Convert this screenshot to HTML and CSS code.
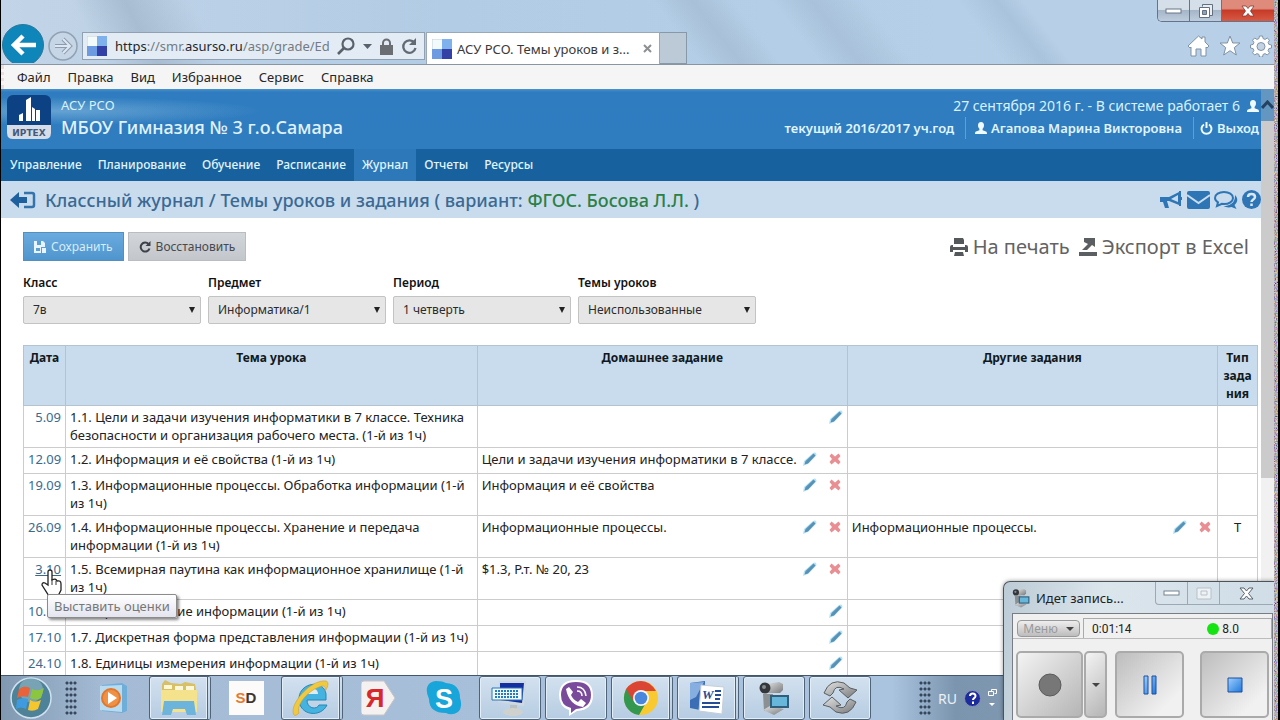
FILE: index.html
```html
<!DOCTYPE html>
<html lang="ru">
<head>
<meta charset="utf-8">
<title>АСУ РСО. Темы уроков и заданий</title>
<link rel="stylesheet" href="styles.css">
</head>
<body>
<svg class="defs" aria-hidden="true">
  <defs>
    <linearGradient id="pen" x1="0" y1="0" x2="1" y2="1"><stop offset="0" stop-color="#62a6cf"/><stop offset="1" stop-color="#4d7f9e"/></linearGradient>
    <linearGradient id="steel" x1="0" y1="0" x2="1" y2="1"><stop offset="0" stop-color="#e4e4e4"/><stop offset="1" stop-color="#77797c"/></linearGradient>
    <linearGradient id="blueglass" x1="0" y1="0" x2="1" y2="1"><stop offset="0" stop-color="#9fd0fb"/><stop offset="1" stop-color="#1e78dd"/></linearGradient>
    <filter id="grain" x="0" y="0" width="100%" height="100%"><feTurbulence type="fractalNoise" baseFrequency="0.8" numOctaves="2" seed="4"/><feColorMatrix values="1 .4 0 0 -.25  .4 1 0 0 -.3  0 .4 1 0 -.25  0 0 0 0 1"/></filter>
    <symbol id="i-pencil" viewBox="0 0 14 14"><path d="M0 14l1-5 9-8q2-1 3 0t0 3l-8 8z" fill="#b5e3f5"/><path d="M1.500 12.500l1-3.500 8-7.500 2 2-7.500 8z" fill="url(#pen)"/></symbol>
    <symbol id="i-cross" viewBox="0 0 12 12"><path d="M2.500.500L6 3.500l3.500-3 2 2.500-2.500 3 2.500 3-2 2.500L6 8.500l-3.500 3L.500 9 3 6 .500 3z" fill="#e98f93"/></symbol>
    <symbol id="i-user" viewBox="0 0 12 12"><path d="M6 0c2 0 3 1.300 3 3.200C9 5 8.200 6 7.600 6.800v1.400L11 9.600c.7.300 1 1 1 2.400H0c0-1.400.3-2.100 1-2.400l3.400-1.400V6.800C3.800 6 3 5 3 3.200 3 1.300 4 0 6 0z" fill="#eefaff"/></symbol>
    <symbol id="i-site" viewBox="0 0 20 20"><path d="M0 0h10v10H0z" fill="#f3fafa"/><path d="M10 0h10v10H10z" fill="#7fb2ec"/><path d="M0 10h10v10H0z" fill="#6c9be2"/><path d="M10 10h10v10H10z" fill="#3340a5"/><path d="M0 10V0h10" fill="none" stroke="#c3d0d8"/></symbol>
    <symbol id="i-cam" viewBox="0 0 32 34"><path d="M8 3l13-2 4 2v6l-3 3H9z" fill="url(#steel)"/><circle cx="7" cy="7" r="5.500" fill="#34363a"/><circle cx="6" cy="6" r="2" fill="#858a92"/><path d="M5 13h10l-1 13 3 4H6z" fill="#8d9093"/><path d="M5 29l7-4 14 3-10 6z" fill="url(#steel)"/><path d="M12 14h19v13H12z" fill="#315e7b"/><path d="M14 16h15v9H14z" fill="#66b7da"/></symbol>
  </defs>
</svg>

<div class="screen">
<main class="desktop">

<header class="browser">
  <div class="aero">
    <div class="winbtns">
      <button type="button" aria-label="Свернуть"><svg width="18" height="8"><rect x="1" y="2" width="15" height="4" fill="#fff" stroke="#697684"/></svg></button>
      <button type="button" aria-label="Развернуть"><svg width="16" height="16" fill="none" stroke="#637080"><path d="M4.500 3.500v-2h10v11h-3" fill="#e9edf2"/><path d="M1.500 4.500h10v10h-10z" fill="#fff"/><path d="M4.500 7.500h4v4h-4z" fill="#8fa4b9"/></svg></button>
      <button type="button" class="close" aria-label="Закрыть"><svg width="14" height="12"><path d="M1 1h4l2 2.500L9 1h4L9.500 6l3.500 5H9L7 8.500 5 11H1l3.500-5z" fill="#fff" stroke="#7d3a35" stroke-width=".8"/></svg></button>
    </div>
    <button type="button" class="back" aria-label="Назад"><svg width="42" height="39" viewBox="0 0 42 39"><circle cx="21" cy="21" r="20.500" fill="#0e86b9" stroke="#2c7799"/><path d="M34 21H12M21 12l-9 9 9 9" fill="none" stroke="#fff" stroke-width="4.500"/></svg></button>
    <button type="button" class="forward" aria-label="Вперёд"><svg width="30" height="30" viewBox="0 0 30 30"><circle cx="15" cy="15" r="14" fill="#c6d6e6" stroke="#91a2b3" stroke-width="1.500"/><path d="M7 15h15M15 8l7 7-7 7" fill="none" stroke="#8c9cae" stroke-width="4"/><path d="M7 15h15M15 8l7 7-7 7" fill="none" stroke="#dde8f2" stroke-width="2"/></svg></button>
    <div class="address">
      <svg width="20" height="20"><use href="#i-site"/></svg>
      <span class="url"><b>https</b>://smr.<b>asurso.ru</b>/asp/grade/Ed</span>
      <button type="button" aria-label="Поиск"><svg width="18" height="18" fill="none" stroke="#59626c"><circle cx="11" cy="7" r="5.500" stroke-width="2.200"/><path d="M7 11l-6 6" stroke-width="2.600"/></svg></button>
      <button type="button" aria-label="Список"><svg width="9" height="5"><path d="M0 0h9L4.500 5z" fill="#59626c"/></svg></button>
      <svg class="lock" width="13" height="17"><path d="M0 7h13v10H0z" fill="#6b6e72"/><path d="M3 8V5a3.500 3.500 0 017 0v3" fill="none" stroke="#6b6e72" stroke-width="2"/></svg>
      <button type="button" aria-label="Обновить"><svg width="17" height="18"><path d="M13.500 6A6.200 6.200 0 1014.500 11" fill="none" stroke="#626a73" stroke-width="2.300"/><path d="M15 1v7H8z" fill="#626a73"/></svg></button>
    </div>
    <div class="tab"><svg width="20" height="20"><use href="#i-site"/></svg><span>АСУ РСО. Темы уроков и з...</span><button type="button" aria-label="Закрыть вкладку"><svg width="9" height="9"><path d="M1 1l7 7M8 1L1 8" stroke="#8d8f92" stroke-width="2"/></svg></button></div>
    <button type="button" class="newtab" aria-label="Новая вкладка"></button>
    <div class="tools">
      <button type="button" aria-label="Домой"><svg width="23" height="22"><path d="M11.500 1L1 11l2 2 1-1v9h5v-7h5v7h5v-9l1 1 2-2-4-4V2h-3v2z" fill="#fff" stroke="#7f91a4"/></svg></button>
      <button type="button" aria-label="Избранное"><svg width="22" height="22"><path d="M11 1l2.700 7H21l-5.700 4.600 2 7.400L11 15.700 4.700 20l2-7.400L1 8h7.300z" fill="#fff" stroke="#7f91a4"/></svg></button>
      <button type="button" aria-label="Сервис"><svg width="22" height="22"><path d="M9.500 1h3l.6 2.600 2 .8 2.200-1.400 2.200 2.200-1.400 2.200.8 2 2.600.6v3l-2.600.6-.8 2 1.400 2.200-2.200 2.200-2.200-1.400-2 .8-.6 2.600h-3l-.6-2.600-2-.8-2.200 1.400L2.500 17.800l1.400-2.200-.8-2L.500 13v-3l2.600-.6.8-2L2.500 5.200 4.700 3l2.200 1.400 2-.8z" fill="#fff" stroke="#8293a5"/><circle cx="11" cy="11.500" r="4" fill="#c3d3e4" stroke="#8293a5"/></svg></button>
    </div>
  </div>
  <nav class="menubar"><a href="#">Файл</a><a href="#">Правка</a><a href="#">Вид</a><a href="#">Избранное</a><a href="#">Сервис</a><a href="#">Справка</a></nav>
</header>

<div class="viewport">
<div class="page">
  <header class="sitehead">
    <svg class="logo" width="44" height="46" viewBox="0 0 44 46"><rect width="44" height="44" rx="6" fill="#0c4283"/><path d="M0 30h44v8q0 6-6 6H6q-6 0-6-6z" fill="#d7dde8"/><path d="M12 20l4-2v8h-4zM19 5l5-3v24h-5zM25 12l3 2v12h-3zM29 15h4v11h-4z" fill="#fff"/><text x="22" y="41" text-anchor="middle" class="logotext">ИРТЕХ</text></svg>
    <div class="brand"><div class="sys">АСУ РСО</div><div class="school">МБОУ Гимназия № 3 г.о.Самара</div></div>
    <div class="session">
      <div class="today">27 сентября 2016 г. - В системе работает 6 <svg width="12" height="12"><use href="#i-user"/></svg></div>
      <div class="who"><span>текущий 2016/2017 уч.год</span><a href="#"><svg width="12" height="12"><use href="#i-user"/></svg>Агапова Марина Викторовна</a><a href="#"><svg width="13" height="13" fill="none" stroke="#eefaff" stroke-width="2"><path d="M4 2.500a5 5 0 105 0M6.500 0v6"/></svg>Выход</a></div>
    </div>
  </header>
  <nav class="mainnav"><a href="#">Управление</a><a href="#">Планирование</a><a href="#">Обучение</a><a href="#">Расписание</a><a href="#" class="on">Журнал</a><a href="#">Отчеты</a><a href="#">Ресурсы</a></nav>
  <div class="crumb">
    <a href="#" aria-label="Выйти"><svg width="26" height="18"><path d="M0 9l9-8v5h8v6H9v5z" fill="#1c60a0"/><path d="M14 2h8q2 0 2 2v10q0 2-2 2h-8" fill="none" stroke="#3573ad" stroke-width="2.500"/></svg></a>
    <h1>Классный журнал / Темы уроков и задания ( вариант: <em>ФГОС. Босова Л.Л.</em> )</h1>
    <div class="alerts">
      <a href="#" aria-label="Объявления"><svg width="24" height="20"><path d="M1 7h9l10-5v13l-10-4H8l2 7H6L4 12H1z" fill="#2d75b5"/><path d="M12 9l7-4v7z" fill="#c8dced"/><path d="M21 1v15M22 7v3" stroke="#2d75b5" stroke-width="2"/></svg></a>
      <a href="#" aria-label="Почта"><svg width="23" height="18"><rect width="23" height="18" rx="2" fill="#2d75b5"/><path d="M0 4l11.500 8L23 4" fill="none" stroke="#c8dced" stroke-width="2"/></svg></a>
      <a href="#" aria-label="Форум"><svg width="24" height="20"><path d="M21 5c4 4 2 8-.500 10l2 4-5-2c-3 1-6 0-8-1 6 0 12-3 11.500-11z" fill="#2d75b5"/><path d="M10 2c5 0 9 2.500 9 6s-4 6-9 6l-2-.2L3 16l1-3.700C2 11 1 10 1 8c0-3.500 4-6 9-6z" fill="#c8dced" stroke="#2d75b5" stroke-width="2"/></svg></a>
      <a href="#" aria-label="Справка"><svg width="19" height="19"><circle cx="9.500" cy="9.500" r="9.500" fill="#2d75b5"/><path d="M6 7c0-4 7-4 7 0 0 2.500-3.500 2.500-3.500 5M9.500 13.500v2.500" fill="none" stroke="#d8e8f4" stroke-width="2.500"/></svg></a>
    </div>
  </div>

  <section class="content">
    <div class="actions">
      <button type="button" class="btn save"><svg width="12" height="12"><path d="M0 0h9l2 2v4H7v6H0z" fill="#e8f5ff"/><path d="M3 0h4v4H3zM2 7h4v3H2z" fill="#5a9fd6"/><path d="M8 7h4v5H8z" fill="#e8f5ff"/></svg>Сохранить</button>
      <button type="button" class="btn"><svg width="12" height="12"><path d="M9.500 3A4.500 4.500 0 1010.500 7.500" fill="none" stroke="#3c4248" stroke-width="2"/><path d="M11.500 0v5h-5z" fill="#3c4248"/></svg>Восстановить</button>
      <div class="export">
        <a href="#"><svg width="18" height="18"><path d="M4 0h9l1 2v4H4zM0 9q0-2 2-2h1v2h12V7h1q2 0 2 2v5h-3v-2H3v2H0zM5 14h8l1 4H4z" fill="#55585b"/></svg>На печать</a>
        <a href="#"><svg width="18" height="18"><path d="M5 0h11v9l-3-2-5 5H3l6-6-4-2zM0 14h18v4H0z" fill="#5c5f61"/></svg>Экспорт в Excel</a>
      </div>
    </div>
    <form class="filters">
      <div class="field"><label for="f1">Класс</label><div class="pick"><select id="f1"><option>7в</option></select><i></i></div></div>
      <div class="field"><label for="f2">Предмет</label><div class="pick"><select id="f2"><option>Информатика/1</option></select><i></i></div></div>
      <div class="field"><label for="f3">Период</label><div class="pick"><select id="f3"><option>1 четверть</option></select><i></i></div></div>
      <div class="field"><label for="f4">Темы уроков</label><div class="pick"><select id="f4"><option>Неиспользованные</option></select><i></i></div></div>
    </form>
    <table class="plan">
      <colgroup><col class="c-date"><col><col class="c-task"><col class="c-task"><col class="c-type"></colgroup>
      <thead><tr><th>Дата</th><th>Тема урока</th><th>Домашнее задание</th><th>Другие задания</th><th>Тип<br>зада<br>ния</th></tr></thead>
      <tbody>
        <tr><td><a href="#">5.09</a></td><td>1.1. Цели и задачи изучения информатики в 7 классе. Техника безопасности и организация рабочего места. (1-й из 1ч)</td><td><div class="task"><span></span><svg><use href="#i-pencil"/></svg></div></td><td></td><td></td></tr>
        <tr><td><a href="#">12.09</a></td><td>1.2. Информация и её свойства (1-й из 1ч)</td><td><div class="task"><span>Цели и задачи изучения информатики в 7 классе.</span><svg><use href="#i-pencil"/></svg><svg class="del"><use href="#i-cross"/></svg></div></td><td></td><td></td></tr>
        <tr><td><a href="#">19.09</a></td><td>1.3. Информационные процессы. Обработка информации (1-й из 1ч)</td><td><div class="task"><span>Информация и её свойства</span><svg><use href="#i-pencil"/></svg><svg class="del"><use href="#i-cross"/></svg></div></td><td></td><td></td></tr>
        <tr><td><a href="#">26.09</a></td><td>1.4. Информационные процессы. Хранение и передача информации (1-й из 1ч)</td><td><div class="task"><span>Информационные процессы.</span><svg><use href="#i-pencil"/></svg><svg class="del"><use href="#i-cross"/></svg></div></td><td><div class="task"><span>Информационные процессы.</span><svg><use href="#i-pencil"/></svg><svg class="del"><use href="#i-cross"/></svg></div></td><td>Т</td></tr>
        <tr><td class="hover"><a href="#">3.10</a>
          <svg class="hand" width="22" height="28" viewBox="0 0 22 28"><path d="M7 16V3q0-2 2-2t2 2v8q4-2 5 1 4-1 4 3v6l-3 6H8L1 16q0-3 3-2z" fill="#fff" stroke="#222" stroke-width="1.300"/><path d="M11 10v6M15 12v4" stroke="#333"/></svg>
          <div class="tip" role="tooltip">Выставить оценки</div></td><td>1.5. Всемирная паутина как информационное хранилище (1-й из 1ч)</td><td><div class="task"><span>$1.3, Р.т. № 20, 23</span><svg><use href="#i-pencil"/></svg><svg class="del"><use href="#i-cross"/></svg></div></td><td></td><td></td></tr>
        <tr><td><a href="#">10.10</a></td><td>1.6. Представление информации (1-й из 1ч)</td><td><div class="task"><span></span><svg><use href="#i-pencil"/></svg></div></td><td></td><td></td></tr>
        <tr><td><a href="#">17.10</a></td><td>1.7. Дискретная форма представления информации (1-й из 1ч)</td><td><div class="task"><span></span><svg><use href="#i-pencil"/></svg></div></td><td></td><td></td></tr>
        <tr><td><a href="#">24.10</a></td><td>1.8. Единицы измерения информации (1-й из 1ч)</td><td><div class="task"><span></span><svg><use href="#i-pencil"/></svg></div></td><td></td><td></td></tr>
      </tbody>
    </table>
  </section>
</div>
<div class="scroll"><div class="up"><svg width="13" height="10"><path d="M1 8l5.500-6L12 8" fill="none" stroke="#24425f" stroke-width="3"/></svg></div><div class="thumb"></div></div>
</div>

<footer class="taskbar">
  <button type="button" class="start" aria-label="Пуск"><svg width="42" height="42" viewBox="0 0 42 42"><circle cx="21" cy="21" r="20" fill="#4e8299" stroke="#cfe2ee" stroke-width="1.500"/><circle cx="21" cy="13" r="12" fill="#9fc3d0" opacity=".5"/><path d="M9 12q5-4 11-1l-2 9q-6-2-11 1z" fill="#e8623a"/><path d="M22 12q6 3 12-1l-3 10q-5 3-11 0z" fill="#8cc63f"/><path d="M7 23q5-3 11-1l-2 10q-5-3-10 0z" fill="#3f9be0"/><path d="M20 23q5 3 11 0l-3 9q-5 3-10 1z" fill="#f6c62d"/></svg></button>
  <div class="grip"></div>
  <div class="slots">
    <button type="button" aria-label="Проигрыватель"><svg width="30" height="32" viewBox="0 0 30 32"><path d="M3 3l20-2 5 3v25l-5 2-20-2z" fill="#70aeda"/><path d="M1 4l22-1v27L1 28z" fill="#b8dbef"/><circle cx="12" cy="16" r="10" fill="#e2762c"/><circle cx="12" cy="16" r="8" fill="#ef9144"/><path d="M9 10l9 6-9 6z" fill="#fff"/></svg></button>
    <button type="button" class="run many" aria-label="Проводник"><svg width="40" height="38" viewBox="0 0 40 38"><path d="M3 5l3-4 6 3 10 1 4-2 10 2 1 6v22H3z" fill="#d8c066"/><path d="M2 11h36v22H2z" fill="#f4e38c"/><path d="M5 6h8v4H5zM16 7h8v4h-8zM27 7h8v4h-8z" fill="#fcf7d7"/><path d="M5 22h30l2 14h-9l-2-6H14l-2 6H3z" fill="#6db4dc"/></svg></button>
    <button type="button" aria-label="SD"><span class="sd"><b>S</b>D</span></button>
    <button type="button" class="run many" aria-label="Internet Explorer"><svg width="42" height="38" viewBox="0 0 42 38"><path d="M37 26c-6 13-28 11-28-6S34 0 36 15v6H17c0 9 10 10 12 5z" fill="#45b3df" stroke="#2588b6"/><path d="M17 15h11c0-7-10-7-11 0z" fill="#dcecf4"/><path d="M4 36C-2 27 20 0 36 2c4 1 1 8-1 10 1-5-1-6-6-4C16 13 6 27 9 34c-2 2-4 3-5 2z" fill="#f0c943" stroke="#d39e24" stroke-width=".6"/></svg></button>
    <button type="button" aria-label="Яндекс"><svg width="35" height="36" viewBox="0 0 35 36"><path d="M3 1h20l11 17-11 17H3q-3 0-3-3V4q0-3 3-3z" fill="#f4f1f0" stroke="#c8c4c6"/><text x="14" y="27" text-anchor="middle" class="ya">Я</text></svg></button>
    <button type="button" aria-label="Skype"><svg width="36" height="36" viewBox="0 0 36 36"><path d="M10 1Q17 1 20 3 34 4 34 18q3 9-2 14-6 4-12 1Q3 33 3 19-2 8 4 3 7 1 10 1z" fill="#18a5d9"/><text x="18" y="28" text-anchor="middle" class="sk">S</text></svg></button>
    <button type="button" class="run" aria-label="Клавиатура"><svg width="40" height="38" viewBox="0 0 40 38"><path d="M9 2h27l-2 25-26-4z" fill="#cfd8df"/><path d="M10 4h24l-2 20-22-3z" fill="#1430a0"/><path d="M2 9h30v12H2z" fill="#edf7fd" stroke="#2a78b4"/><path d="M5 12h24M5 15h24M5 18h24" stroke="#267dba" stroke-width="2" stroke-dasharray="2 1"/><path d="M20 26h7v5h-7z" fill="#bbc0c2"/><ellipse cx="23" cy="33" rx="10" ry="4" fill="#cfd1cf"/></svg></button>
    <button type="button" class="run" aria-label="Viber"><svg width="38" height="38" viewBox="0 0 38 38"><path d="M19 1q17 0 17 15T20 32l-8 5v-6Q2 28 2 16 2 1 19 1z" fill="#fff"/><path d="M19 3q15 0 15 13T19 30l-5 4v-5Q4 27 4 16 4 3 19 3z" fill="#7a4b9b"/><path d="M12 8l4 5-2 3q2 5 7 7l3-3 5 4-3 4Q12 26 9 10z" fill="#fff"/><path d="M20 8q8 0 9 9M20 12q5 0 5 5" fill="none" stroke="#fff" stroke-width="1.500"/></svg></button>
    <button type="button" class="run many" aria-label="Chrome"><svg width="36" height="36" viewBox="0 0 36 36"><circle cx="18" cy="18" r="17" fill="#f8ca30"/><path d="M18 18L3 9q-6 14 5 23 4 3 8 3l8-14z" fill="#33974f"/><path d="M18 18l-7 4L3 9Q9 1 18 1t15 10H19z" fill="#db4534"/><circle cx="18" cy="18" r="8" fill="#f5f7fb"/><circle cx="18" cy="18" r="6.300" fill="#4a87dc"/></svg></button>
    <button type="button" class="run many" aria-label="Word"><svg width="36" height="36" viewBox="0 0 36 36"><path d="M1 3l15-2v30L1 28z" fill="#3b6eb5"/><path d="M1 3l14-1-8 15-6 3z" fill="#87aee0"/><path d="M12 5l23 2-2 27-23-3z" fill="#fff" stroke="#c5ced8"/><text x="13" y="19" class="wd">W</text><path d="M26 11h6M26 15h6M26 19h5M13 23h18M13 27h17" stroke="#254d96" stroke-width="2"/></svg></button>
    <button type="button" class="run" aria-label="Запись экрана"><svg width="32" height="36"><use href="#i-cam"/></svg></button>
    <button type="button" class="run" aria-label="Синхронизация"><svg width="36" height="36" viewBox="0 0 36 36"><path d="M2 13Q8-2 22 3l6 5 7 2-9 8-9-8 5-1Q13 4 11 13l-3 3z" fill="url(#steel)" stroke="#5b5d60"/><path d="M34 22q-6 15-20 10l-6-5-7-2 9-8 9 8-5 1q9 5 11-4l3-3z" fill="url(#steel)" stroke="#5b5d60"/></svg></button>
  </div>
  <div class="tray"><div class="grip"></div><span>RU</span><svg width="17" height="17"><circle cx="8.500" cy="8.500" r="8" fill="#1c2c9c" stroke="#8792b4"/><path d="M6 6c0-3.500 5.500-3.500 5.500 0 0 2.200-2.500 2-2.500 4M9 11.500v2.500" fill="none" stroke="#fff" stroke-width="2"/></svg><svg width="9" height="18" fill="none" stroke="#fff"><path d="M3.500 2.500v-2h5v4h-2M.500 2.500h5v4h-5z"/><path d="M1 14h6l-3 3z" fill="#fff" stroke="none"/></svg></div>
</footer>

<section class="recorder">
  <div class="rectitle"><svg width="18" height="20"><use href="#i-cam"/></svg><span>Идет запись...</span>
    <div class="recbtns"><button type="button" aria-label="Свернуть"><svg width="18" height="7"><rect x="1" y="1" width="15" height="4" fill="#fff" stroke="#77838f"/></svg></button><button type="button" aria-label="Развернуть"><svg width="16" height="13" fill="#eef2f5" stroke="#b6c0c9"><path d="M1 1h14v11H1zM5 4h6v4H5z"/></svg></button><button type="button" aria-label="Закрыть"><svg width="15" height="13"><path d="M1 1h4l2.500 3L10 1h4L9.500 6.500 14 12h-4L7.500 9 5 12H1l4.500-5.500z" fill="#fff" stroke="#56606a"/></svg></button></div>
  </div>
  <div class="recbody">
    <div class="recbar"><button type="button" class="recmenu">Меню<i></i></button><div class="time"><span>0:01:14</span><b></b><span>8.0</span></div></div>
    <div class="reckeys">
      <div class="pair"><button type="button" class="key" aria-label="Запись"><svg width="24" height="24"><circle cx="12" cy="12" r="11" fill="#777" stroke="#5b5b5b"/></svg></button><button type="button" class="key thin" aria-label="Параметры"><i></i></button></div>
      <button type="button" class="key" aria-label="Пауза"><svg width="14" height="20" fill="url(#blueglass)" stroke="#1c4ea3"><path d="M1 1h4v18H1zM9 1h4v18H9z"/></svg></button>
      <button type="button" class="key stop" aria-label="Стоп"><svg width="16" height="16" fill="url(#blueglass)" stroke="#1c4ea3"><path d="M1 1h14v14H1z"/></svg></button>
    </div>
  </div>
</section>
</main>
<svg class="noise" aria-hidden="true"><rect width="100%" height="100%" filter="url(#grain)"/></svg>
<div class="edge"></div>
</div>
</body>
</html>
```
FILE: styles.css
```css
* { box-sizing: border-box; }
body { margin: 0; background: #000; font: 13px/18px "Noto Sans", "Open Sans", sans-serif; color: #222; }
button { font: inherit; color: inherit; border: 0; padding: 0; margin: 0; background: none; display: flex; align-items: center; justify-content: center; }
a { color: inherit; text-decoration: none; }
svg { flex: none; display: block; }
.defs { position: absolute; width: 0; height: 0; }
.screen { display: flex; height: 100vh; padding-left: 1px; overflow: hidden; }
.desktop { position: relative; flex: 1; min-width: 0; display: flex; flex-direction: column; background: #fff; overflow: hidden; }
.noise { width: 4px; height: 100%; }
.edge { width: 2px; background: #000; }

/* browser frame */
.browser { flex: none; }
.aero {
  position: relative; display: flex; align-items: flex-start; height: 65px; padding: 32px 2px 0 1px; border-bottom: 1px solid #8795a4;
  background: linear-gradient(62deg, transparent 8%, #a9bdd2 12%, transparent 17%), linear-gradient(52deg, transparent 53%, #a8c0d8 56%, transparent 59%, transparent 62%, #a9c1da 65%, transparent 69%, transparent 76%, #a9c3dc 79%, #b7cfe7 81%), linear-gradient(90deg, #c2d4e7, #b2cce5 35%, #b4cfe7 75%, #b9d0e8);
}
.winbtns { position: absolute; top: 0; right: 0; display: flex; border: 1px solid #63758a; border-width: 0 0 1px 1px; border-radius: 0 0 0 5px; overflow: hidden; }
.winbtns button { width: 32px; height: 21px; border-right: 1px solid #63758a; background: linear-gradient(#d5dfe9 45%, #a5b6c9 50%, #becddd); }
.winbtns .close { width: 52px; border-right: 0; background: linear-gradient(#df8b7c 40%, #c63b28 50%, #d75a44); }
.back { margin-top: -8px; }
.forward { margin: -1px 0 0 4px; }
.address { display: flex; align-items: center; width: 343px; height: 28px; margin-left: 4px; padding: 0 6px 0 4px; gap: 8px; background: #e3ecf5; border: 1px solid #8fa1b3; }
.url { flex: 1; min-width: 0; overflow: hidden; white-space: nowrap; font-size: 13px; color: #747b83; }
.url b { font-weight: 400; color: #23272b; }
.tab { display: flex; align-items: center; gap: 5px; width: 234px; height: 32px; margin-left: 1px; padding: 0 7px 0 5px; background: #fff; border: 1px solid #9aa9b8; border-bottom: 0; font-size: 13px; color: #3a3a3a; white-space: nowrap; }
.tab span { flex: 1; min-width: 0; }
.newtab { width: 27px; height: 32px; background: #bccad7; border: 1px solid #8798a9; border-left: 0; }
.tools { display: flex; align-items: center; gap: 9px; margin: 3px 0 0 auto; }
.menubar { display: flex; align-items: center; gap: 17px; height: 24px; padding-left: 13px; border-left: 3px dotted #eadede; background: #f5f5f5; font-size: 13px; color: #262626; }

.viewport { flex: 1; min-height: 0; display: flex; overflow: hidden; }
.page { flex: 1; min-width: 0; }
.scroll { width: 13px; background: #f1f1f1; }
.up { height: 32px; display: flex; align-items: center; justify-content: center; background: #6397c1; }
.thumb { height: 61%; background: #cbcbcb; }

/* journal header */
.sitehead {
  display: flex; min-height: 60px; padding: 6px 2px 0 6px; gap: 10px; color: #d9f1fb;
  background: radial-gradient(ellipse 200px 14px at 60px 22px, #7fb5dcaa, transparent), linear-gradient(#4c92c9 0, #2f7dc0 3px, #2f7cbf);
}
.logotext { font: 700 9px "DejaVu Sans", sans-serif; fill: #44597b; }
.sys { font-size: 13px; line-height: 20px; }
.school { font-size: 18px; line-height: 24px; font-weight: 500; color: #e0f3fc; }
.session { margin-left: auto; font-size: 13px; line-height: 22px; }
.today { display: flex; justify-content: flex-end; align-items: center; gap: 7px; font-size: 14px; }
.who { display: flex; justify-content: flex-end; font-weight: 600; color: #e0f5fe; }
.who a { display: flex; align-items: center; gap: 4px; margin-left: 11px; padding-left: 9px; border-left: 1px solid #5f9fd2; }
.who a + a { padding-left: 6px; }
.mainnav { display: flex; height: 32px; padding-left: 1px; background: #17629e; color: #e0f4fd; font-size: 12px; font-weight: 500; }
.mainnav a { display: flex; align-items: center; padding: 0 8px; }
.mainnav .on { background: #2d78b8; }
.crumb { display: flex; align-items: center; gap: 9px; height: 37px; padding: 0 0 0 9px; background: #c8dced; }
.crumb h1 { margin: 0; font-size: 18px; line-height: 24px; font-weight: 500; color: #3b6993; }
.crumb em { font-style: normal; color: #2c8044; }
.alerts { display: flex; align-items: center; gap: 4px; margin-left: auto; }

.content { padding: 14px 3px 0 22px; }
.actions { display: flex; align-items: center; gap: 4px; height: 29px; }
.btn { gap: 5px; height: 29px; padding: 0 10px; font-size: 12px; background: linear-gradient(#d2d5da, #c3c6cb); border: 1px solid #b9bcc0; color: #46494e; }
.btn.save { background: linear-gradient(#6aabdf, #4f95cd); border-color: #5590bd; color: #d8ecf9; }
.export { display: flex; gap: 9px; margin-left: auto; padding-right: 9px; font-size: 20px; line-height: 28px; color: #636363; }
.export a { display: flex; align-items: center; gap: 5px; }
.filters { display: flex; gap: 7px; margin: 13px 0 21px; }
.field { width: 178px; }
.field label { display: block; font-size: 12px; line-height: 18px; font-weight: 600; color: #111; margin-bottom: 4px; }
.pick { position: relative; }
.pick select { appearance: none; display: block; width: 100%; height: 28px; padding: 0 9px; font: 12px/18px "Noto Sans", sans-serif; color: #2b2b2b; background: #e6e6e6; border: 1px solid #c3c3c3; border-radius: 2px; }
.pick i { position: absolute; right: 6px; top: 11px; border: 3px solid transparent; border-top: 6px solid #222; border-bottom: 0; }

/* lesson plan */
.plan { width: 100%; table-layout: fixed; border-collapse: collapse; }
.c-date { width: 42px; }
.c-task { width: 30%; }
.c-type { width: 40px; }
.plan th, .plan td { padding: 3px 4px 2px; vertical-align: top; border: 1px solid #ccc; }
.plan td { padding: 2px 4px 3px; }
.plan th { background: #c8dced; border-color: #b5c3d0; font-size: 12px; font-weight: 700; color: #101820; }
.plan tr { height: 26px; }
.plan td:first-child { text-align: right; color: #3b6a8f; }
.plan td:last-child { text-align: center; }
.plan .task { display: flex; align-items: center; gap: 12px; }
.task span { flex: 1; min-width: 0; min-height: 18px; white-space: nowrap; }
.task svg { width: 14px; height: 14px; }
.task .del { width: 12px; height: 12px; margin-right: 2px; }
.hover { position: relative; }
.hover a { text-decoration: underline; }
.hand { position: absolute; left: 17px; top: 11px; z-index: 2; }
.tip { position: absolute; left: 23px; top: 36px; z-index: 3; height: 24px; padding: 0 6px; white-space: nowrap; line-height: 22px; color: #777; background: linear-gradient(#fff, #e3e4ee); border: 1px solid #8b8b8b; border-radius: 2px; box-shadow: 2px 2px 3px #0007; }

/* taskbar */
.taskbar { flex: none; display: flex; align-items: center; height: 45px; border-top: 1px solid #43566b; background: linear-gradient(90deg, #8099b1, #a5bbd5 8%, #aac3df 70%, #7c95ae 75%, #8da4ba); }
.start { width: 60px; }
.grip { width: 12px; height: 36px; margin-left: 4px; background: radial-gradient(circle, #34475c 1px, transparent 2px) 0 0 / 4px 6px; }
.slots { display: flex; gap: 4px; margin-left: 6px; height: 100%; }
.slots button { width: 62px; height: 100%; }
.run { background: linear-gradient(#d3e1ef, #b6cce2); border: 1px solid #4f6479; border-radius: 3px; box-shadow: inset 0 0 0 1px #e4eef7; }
.many { border-right: 4px double #4f6479; }
.sd { width: 35px; background: #fcfbfa; font: 700 15px/34px "Liberation Sans", sans-serif; color: #40352f; }
.sd b { color: #e9782c; }
.ya { font: 700 26px "Liberation Sans", sans-serif; fill: #d8282c; }
.sk { font: 700 27px "Liberation Sans", sans-serif; fill: #fff; }
.wd { font: italic 700 13px "Liberation Serif", serif; fill: #254d96; }
.tray { display: flex; align-items: center; gap: 7px; margin-left: 44px; font: 14px "Noto Sans", sans-serif; color: #eaf0f6; }

/* screen recorder */
.recorder { position: absolute; right: 0; bottom: 0; width: 271px; padding: 0 1px 0 8px; background: linear-gradient(100deg, #bccbd6, #dbe5ec 35%, #cfdce6); border: 1px solid #4c5359; border-bottom: 0; border-right: 0; border-radius: 7px 0 0 0; box-shadow: 0 0 4px #0006; }
.rectitle { display: flex; align-items: center; gap: 6px; height: 31px; font-size: 13px; color: #222; }
.recbtns { display: flex; align-self: flex-start; margin-left: auto; border: 1px solid #9ba9b5; border-width: 0 0 1px 1px; border-radius: 0 0 0 4px; }
.recbtns button { width: 32px; height: 22px; border-right: 1px solid #9ba9b5; }
.recbtns button:last-child { width: 53px; border-right: 0; }
.recbody { background: #f0f0f0; border: 1px solid #777d82; border-bottom: 0; padding: 0 3px 2px; }
.recbar { display: flex; gap: 3px; height: 25px; padding: 4px 0 0 4px; margin: 0 -3px; border-bottom: 1px solid #bcbcbc; }
.recmenu { width: 63px; height: 17px; margin-top: 2px; gap: 8px; font: 12px/15px "Noto Sans", sans-serif; color: #999; background: linear-gradient(#eee, #bdbdbd); border: 1px solid #999; border-radius: 4px; }
.recmenu i, .thin i { border: 4px solid transparent; border-top: 4px solid #444; border-bottom: 0; }
.time { flex: 1; display: flex; align-items: center; padding: 0 32px 0 8px; gap: 3px; border: 1px solid #aaa; border-bottom: 0; font: 12px/16px Roboto, sans-serif; }
.time b { width: 12px; height: 12px; margin-left: auto; border-radius: 50%; background: #16e312; }
.reckeys { display: flex; gap: 8px; padding-top: 12px; }
.stop { margin-left: auto; }
.pair { display: flex; gap: 1px; }
.key { width: 69px; height: 67px; background: linear-gradient(135deg, #bdbdbd, #f1f1f1 80%); border: 2px solid #aaa; border-radius: 5px; }
.pair .key { width: 67px; background: linear-gradient(135deg, #f3f3f3, #b5b5b5); }
.pair .thin { width: 23px; }
```
